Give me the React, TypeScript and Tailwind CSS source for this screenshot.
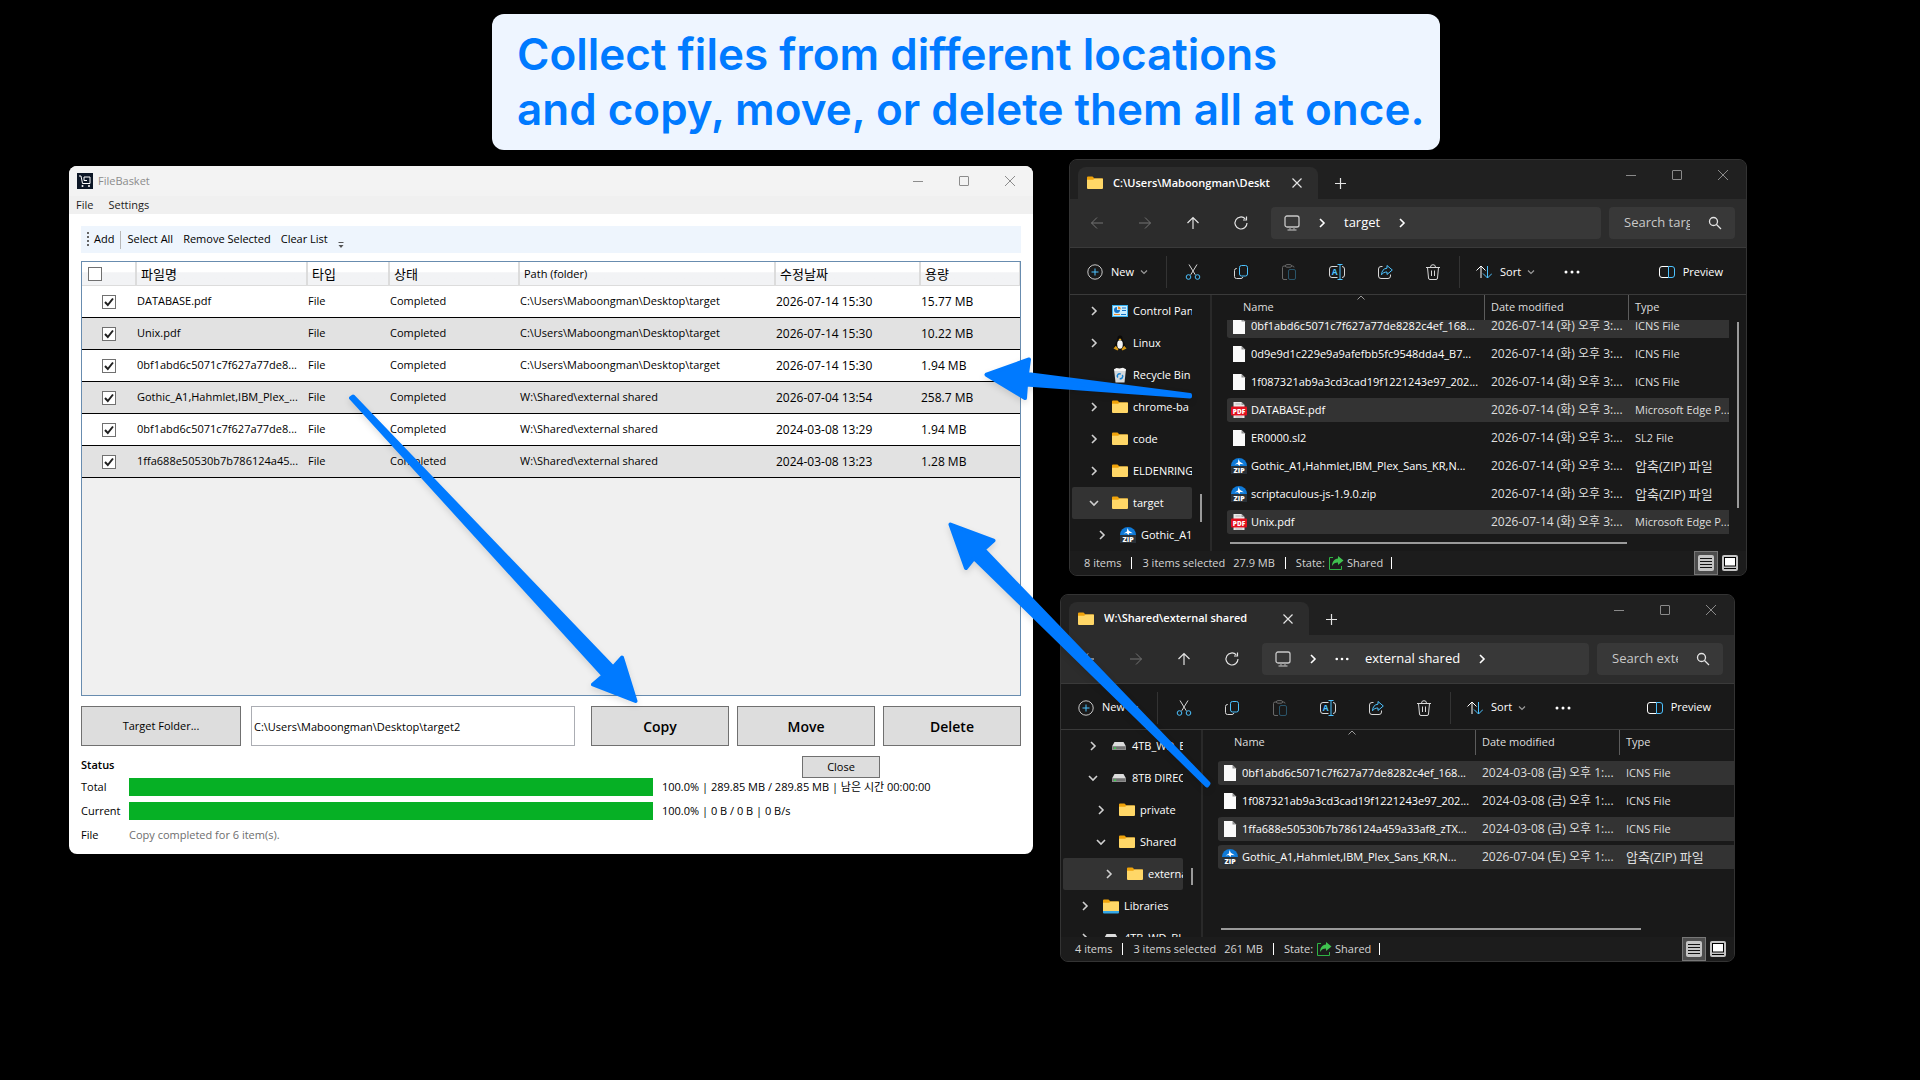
import type { ReactNode } from 'react';

type BasketRow = { name: string; path: string; date: string; size: string };

const LOCAL = 'C:\\Users\\Maboongman\\Desktop\\target';
const SHARED = 'W:\\Shared\\external shared';

const basket: BasketRow[] = [
  { name: 'DATABASE.pdf', path: LOCAL, date: '2026-07-14 15:30', size: '15.77 MB' },
  { name: 'Unix.pdf', path: LOCAL, date: '2026-07-14 15:30', size: '10.22 MB' },
  { name: '0bf1abd6c5071c7f627a77de8...', path: LOCAL, date: '2026-07-14 15:30', size: '1.94 MB' },
  { name: 'Gothic_A1,Hahmlet,IBM_Plex_...', path: SHARED, date: '2026-07-04 13:54', size: '258.7 MB' },
  { name: '0bf1abd6c5071c7f627a77de8...', path: SHARED, date: '2024-03-08 13:29', size: '1.94 MB' },
  { name: '1ffa688e50530b7b786124a45...', path: SHARED, date: '2024-03-08 13:23', size: '1.28 MB' },
];

type IconKind = 'folder' | 'library' | 'panel' | 'linux' | 'bin' | 'drive' | 'zip' | 'pdf' | 'file';
type TreeItem = { label: string; icon: IconKind; level: number; state?: 'open' | 'closed'; active?: boolean };
type FileItem = { name: string; icon: IconKind; date: string; type: string; selected?: boolean };

const targetTree: TreeItem[] = [
  { label: 'Control Panel', icon: 'panel', level: 0, state: 'closed' },
  { label: 'Linux', icon: 'linux', level: 0, state: 'closed' },
  { label: 'Recycle Bin', icon: 'bin', level: 0 },
  { label: 'chrome-ba', icon: 'folder', level: 0, state: 'closed' },
  { label: 'code', icon: 'folder', level: 0, state: 'closed' },
  { label: 'ELDENRING', icon: 'folder', level: 0, state: 'closed' },
  { label: 'target', icon: 'folder', level: 0, state: 'open', active: true },
  { label: 'Gothic_A1', icon: 'zip', level: 1, state: 'closed' },
];

const sharedTree: TreeItem[] = [
  { label: '4TB_WD_BLUE', icon: 'drive', level: 1, state: 'closed' },
  { label: '8TB DIRECT', icon: 'drive', level: 1, state: 'open' },
  { label: 'private', icon: 'folder', level: 2, state: 'closed' },
  { label: 'Shared', icon: 'folder', level: 2, state: 'open' },
  { label: 'external shared', icon: 'folder', level: 3, state: 'closed', active: true },
  { label: 'Libraries', icon: 'library', level: 0, state: 'closed' },
  { label: '4TB_WD_BLUE', icon: 'drive', level: 0, state: 'closed' },
];

const targetFiles: FileItem[] = [
  { name: '0bf1abd6c5071c7f627a77de8282c4ef_168...', icon: 'file', date: '2026-07-14 (화) 오후 3:...', type: 'ICNS File', selected: true },
  { name: '0d9e9d1c229e9a9afefbb5fc9548dda4_B7...', icon: 'file', date: '2026-07-14 (화) 오후 3:...', type: 'ICNS File' },
  { name: '1f087321ab9a3cd3cad19f1221243e97_202...', icon: 'file', date: '2026-07-14 (화) 오후 3:...', type: 'ICNS File' },
  { name: 'DATABASE.pdf', icon: 'pdf', date: '2026-07-14 (화) 오후 3:...', type: 'Microsoft Edge P...', selected: true },
  { name: 'ER0000.sl2', icon: 'file', date: '2026-07-14 (화) 오후 3:...', type: 'SL2 File' },
  { name: 'Gothic_A1,Hahmlet,IBM_Plex_Sans_KR,N...', icon: 'zip', date: '2026-07-14 (화) 오후 3:...', type: '압축(ZIP) 파일' },
  { name: 'scriptaculous-js-1.9.0.zip', icon: 'zip', date: '2026-07-14 (화) 오후 3:...', type: '압축(ZIP) 파일' },
  { name: 'Unix.pdf', icon: 'pdf', date: '2026-07-14 (화) 오후 3:...', type: 'Microsoft Edge P...', selected: true },
];

const sharedFiles: FileItem[] = [
  { name: '0bf1abd6c5071c7f627a77de8282c4ef_168...', icon: 'file', date: '2024-03-08 (금) 오후 1:...', type: 'ICNS File', selected: true },
  { name: '1f087321ab9a3cd3cad19f1221243e97_202...', icon: 'file', date: '2024-03-08 (금) 오후 1:...', type: 'ICNS File' },
  { name: '1ffa688e50530b7b786124a459a33af8_zTX...', icon: 'file', date: '2024-03-08 (금) 오후 1:...', type: 'ICNS File', selected: true },
  { name: 'Gothic_A1,Hahmlet,IBM_Plex_Sans_KR,N...', icon: 'zip', date: '2026-07-04 (토) 오후 1:...', type: '압축(ZIP) 파일', selected: true },
];

const BLUE = '#4cc2ff';

const Svg = ({ size = 16, children }: { size?: number; children: ReactNode }) => (
  <svg width={size} height={size} viewBox={`0 0 ${size} ${size}`} fill="none" stroke="currentColor" className="shrink-0" aria-hidden="true">
    {children}
  </svg>
);

const Chevron = ({ dir = 'right' }: { dir?: 'right' | 'down' }) => (
  <Svg size={12}>
    {dir === 'right' ? <path d="M4 2l4 4-4 4" strokeWidth="1.6" /> : <path d="M2 4l4 4 4-4" strokeWidth="1.6" />}
  </Svg>
);

const SmallChevron = () => (
  <svg width="8" height="8" viewBox="0 0 8 8" fill="none" stroke="#9a9a9a" className="shrink-0" aria-hidden="true">
    <path d="M1 2.500l3 3 3-3" strokeWidth="1.2" />
  </svg>
);

const CaptionButtons = () => (
  <div className="flex h-[30px] shrink-0">
    <button aria-label="Minimize" className="flex w-[46px] items-center justify-center">
      <Svg size={10}><path d="M0 5.500h10" /></Svg>
    </button>
    <button aria-label="Maximize" className="flex w-[46px] items-center justify-center">
      <Svg size={10}><rect x=".5" y=".5" width="9" height="9" rx=".5" /></Svg>
    </button>
    <button aria-label="Close window" className="flex w-[46px] items-center justify-center">
      <Svg size={10}><path d="M0 0l10 10M10 0L0 10" /></Svg>
    </button>
  </div>
);

const ItemIcon = ({ kind }: { kind: IconKind }) => {
  switch (kind) {
    case 'folder':
    case 'library':
      return (
        <Svg>
          <path d="M0 2.500a1 1 0 011-1h4.500l2 2H16V6H0z" fill="#f0a30a" stroke="none" />
          <path d="M0 4.800h6.200l1.300-1.300H15a1 1 0 011 1V13a1 1 0 01-1 1H1a1 1 0 01-1-1z" fill="#ffd767" stroke="none" />
          {kind === 'library' && <path d="M0 13h16v1.500a1 1 0 01-1 1H1a1 1 0 01-1-1z" fill="#35a8e8" stroke="none" />}
        </Svg>
      );
    case 'panel':
      return (
        <Svg>
          <rect x="0" y="2" width="16" height="12" fill="#36b0ee" stroke="none" />
          <rect x="1" y="3" width="14" height="10" fill="#c9ecfd" stroke="none" />
          <path d="M5 4a3 3 0 103 3H5z" fill="#1673c4" stroke="none" />
          <path d="M6 3.500a2.800 2.800 0 012.800 2.800H6z" fill="#f08a24" stroke="none" />
          <path d="M10 5h4M10 7.500h4" stroke="#1673c4" />
          <path d="M2 11.500h6" stroke="#f08a24" />
          <path d="M9 11.500h5" stroke="#1673c4" />
        </Svg>
      );
    case 'linux':
      return (
        <Svg>
          <path d="M8 .5c2 0 2.600 1.500 2.600 3.500 0 2 3 4.500 3 8.500 0 1.500-2 2.500-5.600 2.500s-5.600-1-5.600-2.500c0-4 3-6.500 3-8.500C5.400 2 6 .5 8 .5z" fill="#0b0b0b" stroke="none" />
          <ellipse cx="8" cy="9.500" rx="2.800" ry="4.200" fill="#f4f4f4" stroke="none" />
          <path d="M6.500 4.200L8 3.500l1.500.7L8 5.600z" fill="#f2b01e" stroke="none" />
          <path d="M1.500 13.500l2.300-2.700 2.700 3.400-1 1.300zM14.500 13.500l-2.300-2.700-2.700 3.400 1 1.300z" fill="#d99a14" stroke="none" />
        </Svg>
      );
    case 'bin':
      return (
        <Svg>
          <path d="M2 2h12l-1.500 13.500h-9z" fill="#d4d9dd" stroke="none" />
          <path d="M2.500 2l2-1 3 .6L11 .8 13.500 2v2h-11z" fill="#f5f5f5" stroke="none" />
          <path d="M5.800 10.500a2.300 2.300 0 013-3.400M10.300 8a2.300 2.300 0 01-2.600 3.500" stroke="#1583d7" strokeWidth="1.500" />
        </Svg>
      );
    case 'drive':
      return (
        <Svg>
          <path d="M3.500 4h9L15 8.500H1z" fill="#dcdcdc" stroke="none" />
          <rect x="1" y="8" width="14" height="4" rx=".5" fill="#8c8c8c" stroke="none" />
          <path d="M2 10h12" stroke="#5d5d5d" />
          <rect x="3" y="9.500" width="2" height="1.500" fill="#36d04a" stroke="none" />
        </Svg>
      );
    case 'zip':
      return (
        <Svg>
          <path d="M0 8a8 8 0 0116 0z" fill="#0f7ad8" stroke="none" />
          <path d="M7.500 1l1.300 2.800 4 2.400-3.600-.2L8.500 8 6.600 6l-3 .4 3.300-2z" fill="#fff" stroke="none" />
          <rect x="0" y="8" width="16" height="8" fill="#2a3138" stroke="none" />
          <text x="8" y="15" textAnchor="middle" fontSize="7" fontWeight="800" fill="#fff" stroke="none">ZIP</text>
        </Svg>
      );
    case 'pdf':
      return (
        <Svg>
          <path d="M2.500 0h8L13.500 3v13h-11z" fill="#e9e9e9" stroke="none" />
          <path d="M10.500 0v3h3z" fill="#9a9a9a" stroke="none" />
          <path d="M4.500 2h5M4.500 15h7" stroke="#b5b5b5" />
          <rect x="0" y="4.500" width="16" height="9" rx="1" fill="#e2101f" stroke="none" />
          <text x="8" y="11.500" textAnchor="middle" fontSize="6.500" fontWeight="800" fill="#fff" stroke="none">PDF</text>
        </Svg>
      );
    default:
      return (
        <Svg>
          <path d="M2 0h8.500L14 3.500V16H2z" fill="#fafafa" stroke="none" />
          <path d="M10.500 0v3.500H14z" fill="#8f8f8f" stroke="none" />
        </Svg>
      );
  }
};

const toolIcons: { label: string; dim?: boolean; art: ReactNode }[] = [
  {
    label: 'Cut',
    art: (
      <>
        <path d="M4 .5l6.300 10.300M12 .5L5.700 10.800" />
        <circle cx="3.500" cy="13" r="2.300" stroke={BLUE} />
        <circle cx="12.500" cy="13" r="2.300" stroke={BLUE} />
      </>
    ),
  },
  {
    label: 'Copy files',
    art: (
      <>
        <path d="M4 4.500H3.500a2 2 0 00-2 2v6a2 2 0 002 2h4.500a2 2 0 001.900-1.500" />
        <rect x="6.500" y="1.500" width="8" height="10.500" rx="2" stroke={BLUE} />
      </>
    ),
  },
  {
    label: 'Paste',
    dim: true,
    art: (
      <>
        <path d="M6 15.500H3a1.500 1.500 0 01-1.500-1.500V3.500A1.500 1.500 0 013 2h2M10 2h1.500A1.500 1.500 0 0113 3.500" />
        <rect x="4.500" y=".6" width="6" height="2.600" rx="1.300" />
        <rect x="7.500" y="5.500" width="7" height="10" rx="1.500" stroke={BLUE} />
      </>
    ),
  },
  {
    label: 'Rename',
    art: (
      <>
        <path d="M8.500 2.500H3a2.500 2.500 0 00-2.500 2.500v6A2.500 2.500 0 003 13.500h5.500M13 2.500a2.500 2.500 0 012.500 2.500v6a2.500 2.500 0 01-2.500 2.500" />
        <path d="M11 .5v15M8.500.5h5M8.500 15.500h5" stroke={BLUE} />
        <text x="5.800" y="11.200" textAnchor="middle" fontSize="8.500" fontWeight="700" fill={BLUE} stroke="none">A</text>
      </>
    ),
  },
  {
    label: 'Share',
    art: (
      <>
        <path d="M5.500 2.500H4A2.500 2.500 0 001.500 5v7A2.500 2.500 0 004 14.500h7a2.500 2.500 0 002.500-2.500v-1.500" />
        <path d="M10 1.500l5.300 4.500L10 10.500V8C7.500 8 5.800 8.800 4.500 10.800 4.700 7 6.500 4.500 10 4.200z" stroke={BLUE} strokeLinejoin="round" />
      </>
    ),
  },
  {
    label: 'Delete files',
    art: (
      <path d="M1 3.500h14M5.500 3.200a2.500 2.500 0 015 0M2.500 3.500l1 10.500a1.500 1.500 0 001.500 1.500h6a1.500 1.500 0 001.500-1.500l1-10.500M6.500 6.500v5.500M9.500 6.500v5.500" />
    ),
  },
];

const Dots = ({ size = 16 }: { size?: number }) => (
  <svg width={size} height="4" viewBox="0 0 16 4" fill="currentColor" className="shrink-0" aria-hidden="true">
    <circle cx="2" cy="2" r="1.500" />
    <circle cx="8" cy="2" r="1.500" />
    <circle cx="14" cy="2" r="1.500" />
  </svg>
);

const indents = ['pl-4', 'pl-6', 'pl-8', 'pl-10'];

// name, date, type
const cellStyles = ['pl-1 rounded-l text-white', 'pl-[6px] text-[12px] text-[#dedede]', 'pl-[6px] text-[#dedede]'];

type ExplorerProps = {
  frame: string;
  tabBar: string;
  commandBar: string;
  title: string;
  crumb: string;
  nested?: boolean;
  search: string;
  tree: TreeItem[];
  treeThumb: string;
  files: FileItem[];
  listOffset: string;
  listEnd: string;
  hThumb: string;
  vScroll?: boolean;
  count: string;
  size: string;
};

const Explorer = (p: ExplorerProps) => (
  <section className={`absolute flex flex-col overflow-hidden rounded-lg border border-[#333] bg-[#191919] text-[11px] text-[#e4e4e4] ${p.frame}`}>
    {/* TABS */}
    <div className={`flex shrink-0 bg-[#202020] ${p.tabBar}`}>
      <div className="mt-[7px] ml-2 flex w-[240px] items-center rounded-t-lg bg-[#2c2c2c] pl-[9px]">
        <ItemIcon kind="folder" />
        <span className="ml-[10px] w-[165px] overflow-hidden font-semibold whitespace-nowrap text-white">{p.title}</span>
        <button aria-label="Close tab" className="ml-[14px]">
          <Svg size={10}><path d="M.5.5l9 9M9.500.5l-9 9" strokeWidth="1.200" /></Svg>
        </button>
      </div>
      <button aria-label="New tab" className="mt-2 ml-[17px] flex items-center">
        <Svg size={11}><path d="M5.500 0v11M0 5.500h11" strokeWidth="1.200" /></Svg>
      </button>
      <div className="ml-auto text-[#8a8a8a]"><CaptionButtons /></div>
    </div>

    {/* NAVIGATION */}
    <div className="flex h-[49px] shrink-0 items-center border-b border-[#3a3a3a] bg-[#2c2c2c] pl-[3px]">
      <button aria-label="Back" className={`flex w-12 justify-center ${p.nested ? '' : 'text-[#737373]'}`}>
        <Svg><path d="M14 8H2.500M8 2.500L2.500 8 8 13.500" /></Svg>
      </button>
      <button aria-label="Forward" className="flex w-12 justify-center text-[#737373]">
        <Svg><path d="M2 8h11.500M8 2.500L13.500 8 8 13.500" /></Svg>
      </button>
      <button aria-label="Up" className="flex w-12 justify-center">
        <Svg><path d="M8 14V2.500M2.500 8L8 2.500 13.500 8" strokeWidth="1.200" /></Svg>
      </button>
      <button aria-label="Refresh" className="flex w-12 justify-center">
        <Svg><path d="M14 8a6 6 0 11-1.800-4.300M13.500 1.500v3.500H10" strokeWidth="1.200" /></Svg>
      </button>
      <div className="ml-[6px] flex h-8 min-w-0 flex-1 items-center gap-4 rounded bg-[#383838] pl-[13px] text-[13px] text-white">
        <Svg>
          <rect x="1" y="1" width="14" height="11" rx="2" strokeWidth="1.300" stroke="#c8c8c8" />
          <path d="M6 12v2.500M10 12v2.500M3.500 15h9" stroke="#9a9a9a" strokeWidth="1.300" />
        </Svg>
        <Chevron />
        {p.nested && <Dots size={14} />}
        <span className="whitespace-nowrap">{p.crumb}</span>
        <Chevron />
      </div>
      <div className="mr-[11px] ml-2 flex h-8 w-[126px] shrink-0 items-center rounded bg-[#383838] pl-[15px] text-[13px]">
        <input aria-label={p.search} placeholder={p.search} className="w-[66px] bg-transparent placeholder-[#c8c8c8] outline-none" />
        <button aria-label="Search" className="ml-[17px]">
          <Svg><circle cx="6.500" cy="6.500" r="4" strokeWidth="1.300" /><path d="M9.500 9.500l4.500 4.500" strokeWidth="1.300" /></Svg>
        </button>
      </div>
    </div>

    {/* COMMAND BAR */}
    <div className={`flex shrink-0 items-center border-b border-[#3a3a3a] pt-[2px] text-[11px] font-medium text-white ${p.commandBar}`}>
      <button className="flex w-[96px] items-center pl-[17px]">
        <Svg><circle cx="8" cy="8" r="7.200" stroke="#c8c8c8" /><path d="M8 4.500v7M4.500 8h7" stroke={BLUE} /></Svg>
        <span className="mr-[6px] ml-2">New</span>
        <SmallChevron />
      </button>
      <span className="mr-[2px] h-8 w-px bg-[#333]" />
      {toolIcons.map((t) => (
        <button key={t.label} aria-label={t.label} className={`flex w-12 justify-center ${t.dim ? 'opacity-35' : 'text-[#d8d8d8]'}`}>
          <Svg>{t.art}</Svg>
        </button>
      ))}
      <span className="ml-[2px] h-8 w-px bg-[#333]" />
      <button className="flex w-[88px] items-center pl-4">
        <Svg>
          <path d="M5 14V2M.5 6.500L5 2l4.500 4.500" />
          <path d="M11.500 2v12M7 9.500l4.500 4.500L16 9.500" stroke={BLUE} />
        </Svg>
        <span className="mr-[6px] ml-2">Sort</span>
        <SmallChevron />
      </button>
      <button aria-label="More options" className="flex w-12 justify-center"><Dots /></button>
      <button className="mr-[23px] ml-auto flex items-center gap-2">
        <Svg>
          <path d="M9.500 2.500H3A2.500 2.500 0 00.500 5v6A2.500 2.500 0 003 13.500h6.500" />
          <path d="M9.500 2.500H13A2.500 2.500 0 0115.500 5v6a2.500 2.500 0 01-2.500 2.500H9.500z" stroke={BLUE} />
        </Svg>
        Preview
      </button>
    </div>

    <div className="flex min-h-0 flex-1">
      {/* FOLDER TREE */}
      <nav className="flex w-[142px] shrink-0 overflow-hidden border-r-2 border-[#292929] pl-[2px]">
        <div className="w-[120px] shrink-0">
          {p.tree.map((t, i) => (
            <button
              key={i}
              className={`flex h-8 w-full items-center overflow-hidden rounded-xs whitespace-nowrap text-white ${indents[t.level]} ${t.active ? 'bg-[#333]' : ''}`}
            >
              <span className="w-3 shrink-0 text-[#d0d0d0]">
                {t.state && <Chevron dir={t.state === 'open' ? 'down' : 'right'} />}
              </span>
              <span className="mr-[5px] ml-3 shrink-0"><ItemIcon kind={t.icon} /></span>
              {t.label}
            </button>
          ))}
        </div>
        <span className={`ml-2 w-[2px] bg-[#9a9a9a] ${p.treeThumb}`} />
      </nav>

      {/* FILE LIST */}
      <div className="flex min-w-0 flex-1 flex-col pl-[15px]">
        <div className="relative flex h-[25px] shrink-0 items-center text-[#dedede]">
          <button className="h-full w-[258px] border-r border-[#5c5c5c] pl-4 text-left">Name</button>
          <button className="h-full w-[144px] border-r border-[#5c5c5c] pl-[6px] text-left">Date modified</button>
          <button className="h-full pl-[6px] text-left">Type</button>
          <svg width="8" height="5" viewBox="0 0 8 5" fill="none" stroke="#9a9a9a" className="absolute top-0 left-[130px]" aria-hidden="true">
            <path d="M.5 4.500L4 1l3.500 3.500" />
          </svg>
        </div>
        <div className="flex min-h-0 flex-1">
          <div className={`min-w-0 flex-1 overflow-hidden ${p.listEnd}`}>
            <table aria-label={p.crumb} className={`w-full table-fixed border-separate border-spacing-0 ${p.listOffset}`}>
              <colgroup>
                <col className="w-[258px]" />
                <col className="w-[144px]" />
                <col />
              </colgroup>
              <tbody>
                {p.files.map((f) => (
                  <tr key={f.name} className="h-7">
                    {[f.name, f.date, f.type].map((text, i) => (
                      <td
                        key={i}
                        className={`overflow-hidden border-y-2 border-transparent bg-clip-padding py-0 pr-0 leading-4 whitespace-nowrap ${f.selected ? 'bg-[#333]' : ''} ${cellStyles[i]} ${text.startsWith('압축') ? 'text-[13px]' : ''}`}
                      >
                        {i === 0 ? (
                          <span className="flex items-center gap-1">
                            <ItemIcon kind={f.icon} />
                            {text}
                          </span>
                        ) : text}
                      </td>
                    ))}
                  </tr>
                ))}
              </tbody>
            </table>
          </div>
          {p.vScroll && <span className="mt-[2px] mr-[7px] mb-[34px] w-[2px] bg-[#9a9a9a]" />}
        </div>
        <span className={`mb-[7px] ml-[3px] h-[2px] shrink-0 bg-[#9a9a9a] ${p.hThumb}`} />
      </div>
    </div>

    {/* STATUS BAR */}
    <footer className="flex h-6 shrink-0 items-center bg-[#1c1c1c] pl-[14px] whitespace-nowrap text-[#d4d4d4]">
      <span>{p.count}</span>
      <span className="mx-[10px] h-3 w-px bg-white" />
      <span>3 items selected</span>
      <span className="ml-2">{p.size}</span>
      <span className="mx-[10px] h-3 w-px bg-white" />
      <span>State:</span>
      <span className="mx-[3px]">
        <Svg>
          <path d="M5 2.500H1.500v12h12V11" stroke="#2fb344" />
          <path d="M10 1l5.500 4.500L10 10V7.500c-3 0-4.500 1-6 3.500 0-4 2-7 6-7.500z" fill="#3fc24f" stroke="none" />
        </Svg>
      </span>
      <span>Shared</span>
      <span className="ml-2 h-3 w-px bg-white" />
      <button aria-label="Details view" className="ml-auto flex size-6 items-center justify-center border border-[#777] bg-[#4d4d4d]">
        <Svg><rect width="16" height="16" rx="2" fill="#c4c4c4" stroke="none" /><path d="M2 3.500h12M2 6.500h12M2 9.500h12M2 12.500h12" stroke="#111" /></Svg>
      </button>
      <button aria-label="Thumbnail view" className="mr-2 ml-1">
        <Svg><rect width="16" height="16" rx="2" fill="#c4c4c4" stroke="none" /><rect x="2.500" y="2.500" width="11" height="8.500" fill="#fff" stroke="#000" /><path d="M2 13.500h12" stroke="#000" /></Svg>
      </button>
    </footer>
  </section>
);

const BasketButton = ({ label }: { label: string }) => (
  <button className="h-10 w-[138px] border border-[#707070] bg-[#ddd] text-[14px] font-semibold">{label}</button>
);

const FileBasket = () => (
  <section className="absolute top-[166px] left-[69px] flex h-[688px] w-[964px] flex-col overflow-hidden rounded-lg bg-white text-[11px] text-black">
    <header className="flex h-[30px] shrink-0 items-center bg-[#f3f3f3] pl-2 text-[#8c8c8c]">
      <Svg>
        <rect width="16" height="16" fill="#0d1726" stroke="none" />
        <path d="M2 3h2l1.500 7.500h7.500V4H7v3.500h3" stroke="#fff" />
        <circle cx="5.500" cy="13" r="1" fill="#fff" stroke="none" />
        <circle cx="12" cy="13" r="1" fill="#fff" stroke="none" />
      </Svg>
      <h1 className="ml-[5px]">FileBasket</h1>
      <div className="ml-auto"><CaptionButtons /></div>
    </header>
    <div className="flex h-[18px] shrink-0 items-center gap-[15px] bg-[#f0f0f0] pl-[7px] text-[#1c1c1c]">
      <button>File</button>
      <button>Settings</button>
    </div>

    <div className="flex min-h-0 flex-1 flex-col px-3 pt-3">
      <div className="flex h-[27px] shrink-0 items-center bg-[#eef5fd] pl-[6px]">
        <svg width="2" height="14" viewBox="0 0 2 14" className="mr-[5px] mb-[2px]" aria-hidden="true">
          <path d="M0 0h2v2H0zM0 4h2v2H0zM0 8h2v2H0zM0 12h2v2H0z" fill="#666" />
        </svg>
        <button>Add</button>
        <span className="mx-[6px] h-[18px] w-px bg-[#b8b8b8]" />
        <button>Select All</button>
        <button className="ml-[10px]">Remove Selected</button>
        <button className="ml-[10px]">Clear List</button>
        <svg width="6" height="7" viewBox="0 0 6 7" className="mt-[11px] ml-[10px]" aria-hidden="true">
          <path d="M.5 0h5v1h-5zM.5 3h5L3 6z" fill="#555" />
        </svg>
      </div>

      <div className="mt-2 min-h-0 flex-1 border border-[#688caf] bg-[#f0f0f0]">
        <table className="w-full table-fixed border-separate border-spacing-0 text-left whitespace-nowrap">
          <colgroup>
            <col className="w-[55px]" />
            <col className="w-[171px]" />
            <col className="w-[82px]" />
            <col className="w-[130px]" />
            <col className="w-[256px]" />
            <col className="w-[145px]" />
            <col />
          </colgroup>
          <thead>
            <tr className="h-6 bg-linear-to-b from-white from-40% to-[#f2f3f5] to-45% leading-4">
              <th className="border-r-2 border-b border-[#dcdcdc] p-0 pl-[6px]">
                <input type="checkbox" aria-label="Select all rows" className="block size-[14px] appearance-none border border-[#707070] bg-white" />
              </th>
              {['파일명', '타입', '상태', 'Path (folder)', '수정날짜', '용량'].map((h) => (
                <th key={h} className={`border-r-2 border-b border-[#dcdcdc] p-0 pl-1 font-normal last:border-r ${h.startsWith('Path') ? '' : 'text-[13px]'}`}>{h}</th>
              ))}
            </tr>
          </thead>
          <tbody>
            {basket.map((row, i) => (
              <tr key={i} className="h-8 bg-white even:bg-[#e2e2e2]">
                <td className="border-b border-black p-0 pl-5">
                  <span className="relative block size-[14px]">
                    <input type="checkbox" defaultChecked aria-label={row.name} className="block size-[14px] appearance-none border border-[#707070] bg-white" />
                    <svg width="14" height="14" viewBox="0 0 14 14" fill="none" stroke="#212121" className="pointer-events-none absolute inset-0" aria-hidden="true">
                      <path d="M3 7l2.800 3L11 3.500" strokeWidth="2" />
                    </svg>
                  </span>
                </td>
                <td className="border-b border-black p-0">{row.name}</td>
                <td className="border-b border-black p-0">File</td>
                <td className="border-b border-black p-0">Completed</td>
                <td className="border-b border-black p-0">{row.path}</td>
                <td className="border-b border-black p-0 text-[12px]">{row.date}</td>
                <td className="border-b border-black p-0 text-[12px]">{row.size}</td>
              </tr>
            ))}
          </tbody>
        </table>
      </div>

      <div className="mt-[10px] flex shrink-0">
        <button className="h-10 w-40 border border-[#707070] bg-[#ddd]">Target Folder...</button>
        <input
          aria-label="Target folder"
          defaultValue={'C:\\Users\\Maboongman\\Desktop\\target2'}
          className="mr-4 ml-[10px] h-10 min-w-0 flex-1 border border-[#abadb3] px-[2px] outline-none"
        />
        <div className="flex gap-2">
          <BasketButton label="Copy" />
          <BasketButton label="Move" />
          <BasketButton label="Delete" />
        </div>
      </div>

      {/* STATUS */}
      <div className="mt-[10px] flex h-[22px] shrink-0 justify-between">
        <h2 className="leading-[18px] font-semibold">Status</h2>
        <button className="mr-[141px] h-[22px] w-[78px] border border-[#707070] bg-[#ddd]">Close</button>
      </div>
      <div className="grid shrink-0 grid-cols-[48px_524px_1fr] gap-y-[6px] pb-[10px] leading-[18px]">
        <span>Total</span>
        <div role="progressbar" aria-label="Total" aria-valuenow={100} className="h-[18px] bg-[#06b025]" />
        <span className="pl-[9px]">100.0% | 289.85 MB / 289.85 MB | 남은 시간 00:00:00</span>
        <span>Current</span>
        <div role="progressbar" aria-label="Current" aria-valuenow={100} className="h-[18px] bg-[#06b025]" />
        <span className="pl-[9px]">100.0% | 0 B / 0 B | 0 B/s</span>
        <span>File</span>
        <span className="col-span-2 text-[#6e6e6e]">Copy completed for 6 item(s).</span>
      </div>
    </div>
  </section>
);

const arrows = [
  'M351 398L353 396.500 613 667.500 622 657.500 635.500 701 593 684.500 603.500 675.500z',
  'M1190 395L1190 396.500 1026 384.500 1025 398 986.500 374.700 1029 359.500 1027 374z',
  'M1208.500 783.500L1207 785.500 974 558 966 568 950.500 524.500 993.500 540.500 983.500 549.500z',
];

export default function App() {
  return (
    <main className="relative min-h-screen w-full overflow-hidden bg-black font-['Open_Sans','Noto_Sans_CJK_KR',sans-serif]">
      <p className="absolute top-[14px] left-[492px] w-[948px] rounded-xl bg-[#eef5ff] px-[25px] py-[13px] font-['Inter',sans-serif] text-[44px] leading-[55px] font-semibold whitespace-nowrap text-[#007aff]">
        Collect files from different locations
        <br />
        and copy, move, or delete them all at once.
      </p>

      <FileBasket />

      <Explorer
        frame="top-[159px] left-[1069px] h-[417px] w-[678px]"
        tabBar="h-[39px]"
        commandBar="h-[47px]"
        title={'C:\\Users\\Maboongman\\Deskt'}
        crumb="target"
        search="Search target"
        tree={targetTree}
        treeThumb="mt-[199px] h-7"
        files={targetFiles}
        listOffset="-mt-2"
        listEnd="mr-2"
        hThumb="w-[397px]"
        vScroll
        count="8 items"
        size="27.9 MB"
      />
      <Explorer
        frame="top-[594px] left-[1060px] h-[368px] w-[675px]"
        tabBar="h-10"
        commandBar="h-[46px]"
        title={SHARED}
        crumb="external shared"
        nested
        search="Search external shared"
        tree={sharedTree}
        treeThumb="mt-[138px] h-[17px]"
        files={sharedFiles}
        listOffset="mt-1"
        listEnd=""
        hThumb="w-[420px]"
        count="4 items"
        size="261 MB"
      />

      {/* Callout arrows drawn over the windows */}
      <svg className="pointer-events-none absolute inset-0 size-full drop-shadow-md" aria-hidden="true">
        {arrows.map((d) => (
          <path key={d} d={d} fill="#007aff" stroke="#007aff" strokeWidth="4" strokeLinejoin="round" />
        ))}
      </svg>
    </main>
  );
}
